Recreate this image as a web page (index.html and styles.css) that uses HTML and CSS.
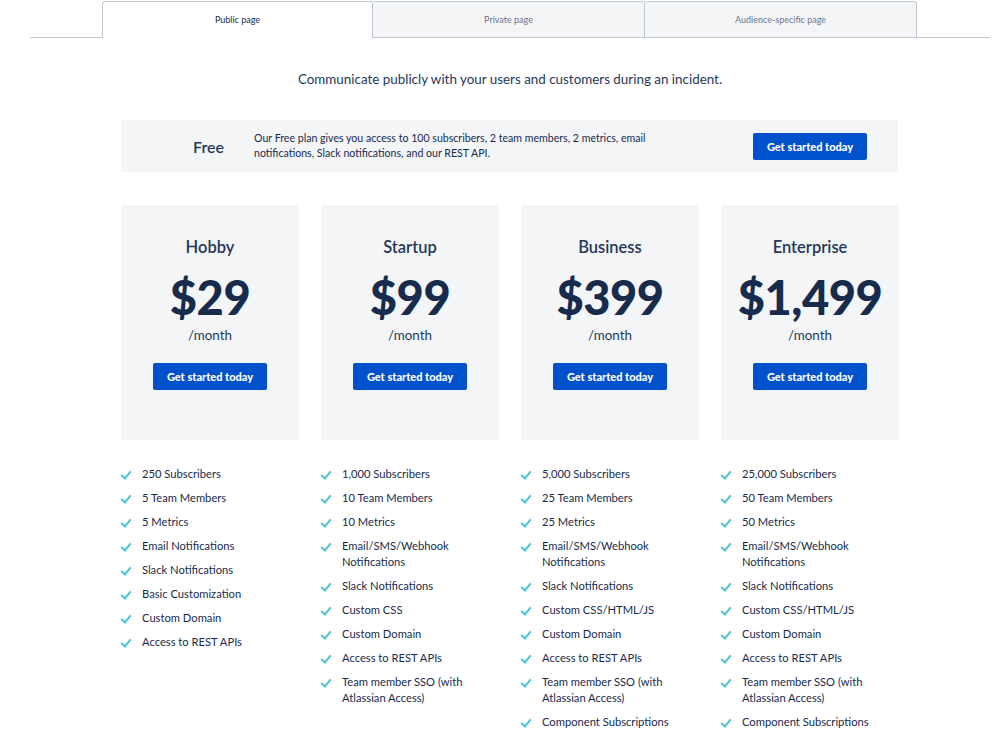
FILE: index.html
```html
<!DOCTYPE html>
<html lang="en">
<head>
    <meta charset="UTF-8">
    <meta name="viewport" content="width=device-width, initial-scale=1.0">
    <title>Pricing - Public page</title>
    <link rel="stylesheet" href="styles.css">
</head>
<body>
    <div class="tabs">
        <div class="tab active">Public page</div>
        <div class="tab">Private page</div>
        <div class="tab">Audience-specific page</div>
    </div>

    <p class="tagline">Communicate publicly with your users and customers during an incident.</p>

    <div class="free">
        <div class="free-name">Free</div>
        <p class="free-text">Our Free plan gives you access to 100 subscribers, 2 team members, 2 metrics, email notifications, Slack notifications, and our REST API.</p>
        <a href="#" class="button">Get started today</a>
    </div>

    <div class="plans">
        <div class="plan">
            <div class="card">
                <h2>Hobby</h2>
                <div class="price">$29</div>
                <div class="per">/month</div>
                <a href="#" class="button">Get started today</a>
            </div>
            <ul class="features">
                <li>250 Subscribers</li>
                <li>5 Team Members</li>
                <li>5 Metrics</li>
                <li>Email Notifications</li>
                <li>Slack Notifications</li>
                <li>Basic Customization</li>
                <li>Custom Domain</li>
                <li>Access to REST APIs</li>
            </ul>
        </div>
        <div class="plan">
            <div class="card">
                <h2>Startup</h2>
                <div class="price">$99</div>
                <div class="per">/month</div>
                <a href="#" class="button">Get started today</a>
            </div>
            <ul class="features">
                <li>1,000 Subscribers</li>
                <li>10 Team Members</li>
                <li>10 Metrics</li>
                <li>Email/SMS/Webhook Notifications</li>
                <li>Slack Notifications</li>
                <li>Custom CSS</li>
                <li>Custom Domain</li>
                <li>Access to REST APIs</li>
                <li>Team member SSO (with Atlassian Access)</li>
            </ul>
        </div>
        <div class="plan">
            <div class="card">
                <h2>Business</h2>
                <div class="price">$399</div>
                <div class="per">/month</div>
                <a href="#" class="button">Get started today</a>
            </div>
            <ul class="features">
                <li>5,000 Subscribers</li>
                <li>25 Team Members</li>
                <li>25 Metrics</li>
                <li>Email/SMS/Webhook Notifications</li>
                <li>Slack Notifications</li>
                <li>Custom CSS/HTML/JS</li>
                <li>Custom Domain</li>
                <li>Access to REST APIs</li>
                <li>Team member SSO (with Atlassian Access)</li>
                <li>Component Subscriptions</li>
            </ul>
        </div>
        <div class="plan">
            <div class="card">
                <h2>Enterprise</h2>
                <div class="price">$1,499</div>
                <div class="per">/month</div>
                <a href="#" class="button">Get started today</a>
            </div>
            <ul class="features">
                <li>25,000 Subscribers</li>
                <li>50 Team Members</li>
                <li>50 Metrics</li>
                <li>Email/SMS/Webhook Notifications</li>
                <li>Slack Notifications</li>
                <li>Custom CSS/HTML/JS</li>
                <li>Custom Domain</li>
                <li>Access to REST APIs</li>
                <li>Team member SSO (with Atlassian Access)</li>
                <li>Component Subscriptions</li>
            </ul>
        </div>
    </div>
</body>
</html>
```

FILE: styles.css
```css
body {
    background-color: #ffffff;
    color: #172b4d;
    font-family: Lato, "Noto Sans", sans-serif;
    margin: 0;
    padding: 0;
}
.tabs {
    display: flex;
    width: 888px;
    margin: 0 0 0 30px;
    padding: 1px 0 0 72px;
    border-bottom: 1px solid #c1c7d0;
}
.tab {
    box-sizing: border-box;
    flex: none;
    width: 272px;
    height: 36px;
    line-height: 35px;
    text-align: center;
    font-size: 9px;
    color: #6b778c;
    background-color: #f4f5f7;
    border: 1px solid #c1c7d0;
    border-bottom: none;
    border-left: none;
    border-radius: 3px 3px 0 0;
}
.tab.active {
    width: 271px;
    background-color: #ffffff;
    color: #172b4d;
    border-left: 1px solid #c1c7d0;
    margin-bottom: -1px;
    height: 37px;
}
.tagline {
    font-size: 13.4px;
    color: #253858;
    text-align: center;
    margin: 32px 0 0 14px;
    line-height: 18px;
}
.free {
    display: flex;
    align-items: center;
    width: 777px;
    height: 52px;
    margin: 32px 0 0 121px;
    background-color: #f4f5f7;
}
.free-name {
    padding-left: 72px;
    font-size: 16px;
    font-weight: 600;
    color: #253858;
}
.free-text {
    width: 440px;
    margin: 0 0 0 30px;
    font-size: 10.6px;
    line-height: 15px;
    color: #172b4d;
}
.free .button {
    margin-left: 59px;
}
.button {
    display: inline-block;
    background-color: #0052cc;
    color: #ffffff;
    font-size: 11px;
    font-weight: 900;
    text-decoration: none;
    width: 114px;
    height: 27px;
    line-height: 27px;
    text-align: center;
    border-radius: 2px;
}
.plans {
    display: grid;
    grid-template-columns: repeat(4, 178px);
    column-gap: 22px;
    margin: 33px 0 0 121px;
}
.card {
    background-color: #f4f5f7;
    border-radius: 3px;
    height: 235px;
    text-align: center;
    padding-top: 31px;
    box-sizing: border-box;
}
.card h2 {
    margin: 0;
    font-size: 16.5px;
    font-weight: 600;
    line-height: 22px;
    color: #253858;
}
.price {
    font-size: 47px;
    font-weight: 900;
    line-height: 50px;
    margin-top: 14px;
    color: #172b4d;
    letter-spacing: -0.5px;
}
.per {
    font-size: 13.4px;
    line-height: 18px;
    margin-top: 4px;
    color: #253858;
}
.card .button {
    margin-top: 19px;
}
.features {
    list-style: none;
    margin: 26px 0 0 0;
    padding: 0;
}
.features li {
    position: relative;
    padding-left: 21px;
    font-size: 11.2px;
    line-height: 16px;
    margin-bottom: 8px;
    color: #172b4d;
}
.features li::before {
    content: "";
    position: absolute;
    left: 2px;
    top: 3px;
    width: 4px;
    height: 8px;
    border-right: 2px solid #4fc4cf;
    border-bottom: 2px solid #4fc4cf;
    transform: rotate(40deg);
}
```
